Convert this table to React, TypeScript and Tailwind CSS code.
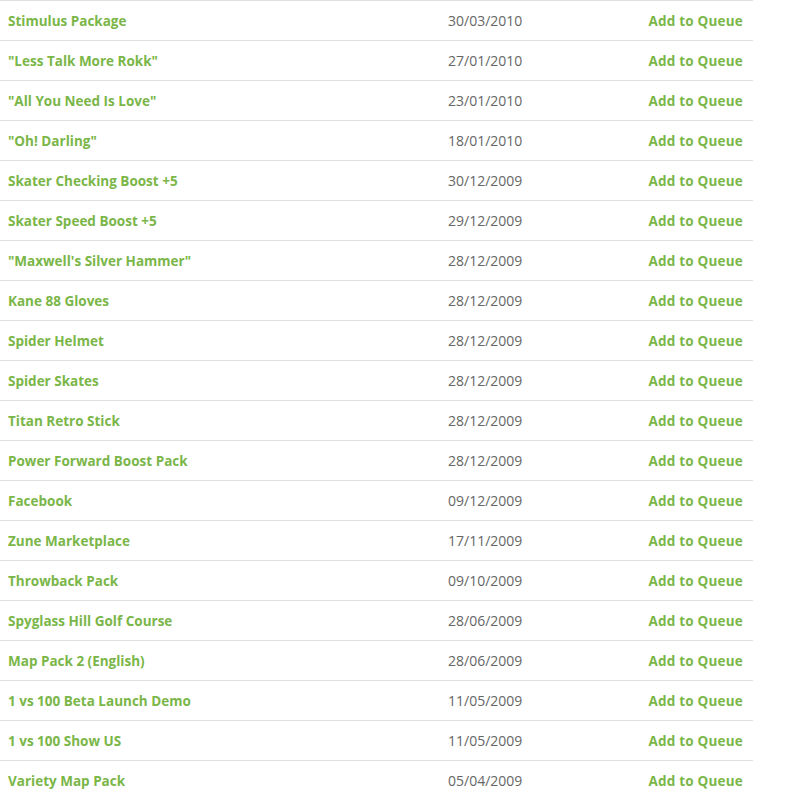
import React from "react";

const rows: [string, string][] = [
  ["Stimulus Package", "30/03/2010"],
  ["\"Less Talk More Rokk\"", "27/01/2010"],
  ["\"All You Need Is Love\"", "23/01/2010"],
  ["\"Oh! Darling\"", "18/01/2010"],
  ["Skater Checking Boost +5", "30/12/2009"],
  ["Skater Speed Boost +5", "29/12/2009"],
  ["\"Maxwell's Silver Hammer\"", "28/12/2009"],
  ["Kane 88 Gloves", "28/12/2009"],
  ["Spider Helmet", "28/12/2009"],
  ["Spider Skates", "28/12/2009"],
  ["Titan Retro Stick", "28/12/2009"],
  ["Power Forward Boost Pack", "28/12/2009"],
  ["Facebook", "09/12/2009"],
  ["Zune Marketplace", "17/11/2009"],
  ["Throwback Pack", "09/10/2009"],
  ["Spyglass Hill Golf Course", "28/06/2009"],
  ["Map Pack 2 (English)", "28/06/2009"],
  ["1 vs 100 Beta Launch Demo", "11/05/2009"],
  ["1 vs 100 Show US", "11/05/2009"],
  ["Variety Map Pack", "05/04/2009"],
];

export default function App() {
  return (
    <div className="bg-white min-h-screen" style={{ fontFamily: '"Open Sans", "Noto Sans", sans-serif' }}>
      <div className="w-[753px] flex flex-col">
        {rows.map(([name, date], i) => (
          <div key={i} className="h-[40px] flex items-baseline pt-[11px] leading-[18px] border-t border-[#e0e0e0]">
            <div className="w-[448px] pl-2 font-bold text-[13.5px] text-[#7ab648]">{name}</div>
            <div className="flex-1 text-[14px] text-[#666666]">{date}</div>
            <div className="pr-[10px] font-bold text-[13.5px] tracking-[0.2px] text-[#7ab648]">Add to Queue</div>
          </div>
        ))}
      </div>
    </div>
  );
}
